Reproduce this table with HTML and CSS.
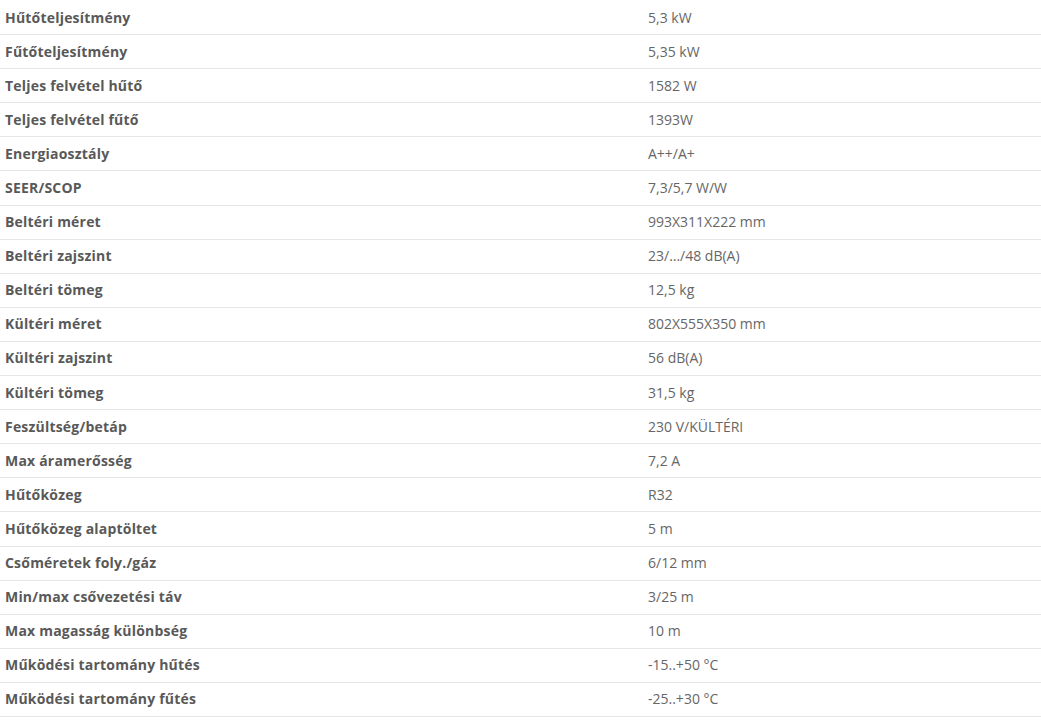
FILE: index.html
```html
<!DOCTYPE html>
<html lang="hu">
<head>
<meta charset="utf-8">
<link rel="stylesheet" href="styles.css">
</head>
<body>
<table class="specs">
<tbody>
<tr><th>Hűtőteljesítmény</th><td>5,3 kW</td></tr>
<tr><th>Fűtőteljesítmény</th><td>5,35 kW</td></tr>
<tr><th>Teljes felvétel hűtő</th><td>1582 W</td></tr>
<tr><th>Teljes felvétel fűtő</th><td>1393W</td></tr>
<tr><th>Energiaosztály</th><td>A++/A+</td></tr>
<tr><th>SEER/SCOP</th><td>7,3/5,7 W/W</td></tr>
<tr><th>Beltéri méret</th><td>993X311X222 mm</td></tr>
<tr><th>Beltéri zajszint</th><td>23/…/48 dB(A)</td></tr>
<tr><th>Beltéri tömeg</th><td>12,5 kg</td></tr>
<tr><th>Kültéri méret</th><td>802X555X350 mm</td></tr>
<tr><th>Kültéri zajszint</th><td>56 dB(A)</td></tr>
<tr><th>Kültéri tömeg</th><td>31,5 kg</td></tr>
<tr><th>Feszültség/betáp</th><td>230 V/KÜLTÉRI</td></tr>
<tr><th>Max áramerősség</th><td>7,2 A</td></tr>
<tr><th>Hűtőközeg</th><td>R32</td></tr>
<tr><th>Hűtőközeg alaptöltet</th><td>5 m</td></tr>
<tr><th>Csőméretek foly./gáz</th><td>6/12 mm</td></tr>
<tr><th>Min/max csővezetési táv</th><td>3/25 m</td></tr>
<tr><th>Max magasság különbség</th><td>10 m</td></tr>
<tr><th>Működési tartomány hűtés</th><td>-15..+50 °C</td></tr>
<tr><th>Működési tartomány fűtés</th><td>-25..+30 °C</td></tr>
</tbody>
</table>
</body>
</html>
```
FILE: styles.css
```css
html, body {
  margin: 0;
  padding: 0;
  background: #ffffff;
}
body {
  font-family: "Open Sans", "Liberation Sans", sans-serif;
  font-size: 14px;
  color: #666666;
}
.specs {
  width: 100%;
  margin-top: 1px;
  border-collapse: collapse;
  border-spacing: 0;
}
.specs th,
.specs td {
  padding: 5.5px 5px 6.5px;
  line-height: 21.1px;
  text-align: left;
  vertical-align: middle;
  border-bottom: 1px solid #e6e6e6;
}
.specs th {
  width: 633px;
  font-weight: 700;
  letter-spacing: 0.2px;
  color: #595959;
}
.specs td {
  font-weight: 400;
  color: #666666;
}
```
